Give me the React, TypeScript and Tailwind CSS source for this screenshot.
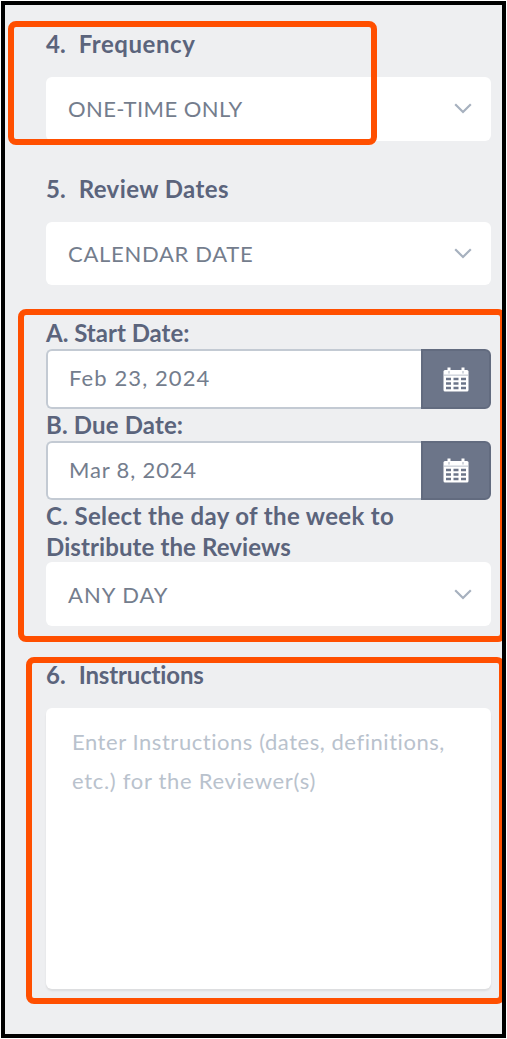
const ChevronIcon = () => (
  <svg width="18" height="11" viewBox="0 0 18 11" fill="none" stroke="#a7b1bf" strokeWidth="2.2">
    <path d="M1.200 1.200 9 9l7.800-7.800" />
  </svg>
);

const CalendarIcon = () => (
  <svg width="26" height="25" viewBox="0 0 26 25">
    <path d="M6 0.500v5M20 0.500v5" stroke="#fff" strokeWidth="3" />
    <path d="M2 3h22q1.500 0 1.500 1.500V23q0 1.500-1.500 1.500H2Q0.500 24.500 0.500 23V4.500Q0.500 3 2 3z" fill="#fff" />
    <path d="M1 8.200h24" stroke="#d3d7de" strokeWidth="1.600" />
    <path d="M6 4v2.500M20 4v2.500" stroke="#c5cad3" strokeWidth="1.500" />
    <g stroke="#6c7589" strokeWidth="2.400" strokeDasharray="5 2.500">
      <path d="M3 12h20M3 16.500h20M3 21h20" />
    </g>
  </svg>
);

type FieldProps = {
  value: string;
  className: string;
  textClassName: string;
};

const Select = ({ value, className, textClassName }: FieldProps) => (
  <button
    className={`flex w-full items-center justify-between rounded-md bg-white pl-[22px] pr-[19px] text-left text-[22px] font-normal text-[#747d8d] ${className}`}
  >
    <span className={textClassName}>{value}</span>
    <ChevronIcon />
  </button>
);

const DateField = ({ value, className, textClassName }: FieldProps) => (
  <div className={`flex w-full ${className}`}>
    <div className="flex flex-1 items-center rounded-l-md border-2 border-r-0 border-[#c3cad3] bg-white pb-[3px] pl-[21px] text-[22px] font-normal text-[#747d8d]">
      <span className={textClassName}>{value}</span>
    </div>
    <button className="flex w-[70px] items-center justify-center rounded-r-md border-2 border-[#626b7f] bg-[#6c7589]">
      <CalendarIcon />
    </button>
  </div>
);

const App = () => {
  return (
    <div className="h-[1039px] w-[507px] bg-white p-px font-['Lato','Open_Sans',sans-serif]">
      <main className="relative h-[1037px] w-[505px] overflow-hidden border-4 border-black bg-[#eeeff1] pl-[41px] pr-[11px] pt-[22px] text-[24px] font-bold leading-[31px] text-[#5b647c]">
        <h2 className="flex h-[50px] gap-[13px] pt-px">
          <span>4.</span>
          <span className="tracking-[0.55px]">Frequency</span>
        </h2>
        <Select value="ONE-TIME ONLY" className="h-16 pb-px" textClassName="tracking-[0.42px]" />

        <h2 className="mt-[31px] flex h-[50px] gap-[13px] pt-px">
          <span>5.</span>
          <span className="tracking-[0.42px]">Review Dates</span>
        </h2>
        <Select value="CALENDAR DATE" className="h-[63px] pb-px" textClassName="tracking-[0.7px]" />

        <h3 className="mt-8 h-8">A. Start Date:</h3>
        <DateField value="Feb 23, 2024" className="h-[60px]" textClassName="tracking-[1.1px]" />
        <h3 className="h-8 tracking-[0.15px]">B. Due Date:</h3>
        <DateField value="Mar 8, 2024" className="h-[59px]" textClassName="tracking-[0.85px]" />
        <h3 className="h-[62px] whitespace-nowrap">
          <span className="block tracking-[0.35px]">C. Select the day of the week to</span>
          <span className="block tracking-[0.1px]">Distribute the Reviews</span>
        </h3>
        <Select value="ANY DAY" className="h-16" textClassName="tracking-[1px]" />

        <h2 className="mt-8 flex h-[50px] gap-[13px] pt-px">
          <span>6.</span>
          <span className="tracking-[-0.15px]">Instructions</span>
        </h2>
        <div className="h-[281px] whitespace-nowrap rounded-md bg-white pl-[26px] pt-[14px] text-[22px] font-normal leading-[39px] text-[#b9c2cd] shadow-[0_2px_2px_rgba(0,0,0,0.08)]">
          <p className="tracking-[0.55px]">Enter Instructions (dates, definitions,</p>
          <p className="tracking-[0.69px]">etc.) for the Reviewer(s)</p>
        </div>

        {/* callouts drawn over the form */}
        <div className="absolute left-[3px] top-[16px] h-[124px] w-[369px] rounded-[8px] border-[6px] border-[#ff4f00]" />
        <div className="absolute left-[13px] top-[304px] h-[333px] w-[488px] rounded-[8px] border-[6px] border-[#ff4f00]" />
        <div className="absolute left-[21px] top-[652px] h-[347px] w-[479px] rounded-[8px] border-[6px] border-[#ff4f00]" />
      </main>
    </div>
  );
};

export default App;
